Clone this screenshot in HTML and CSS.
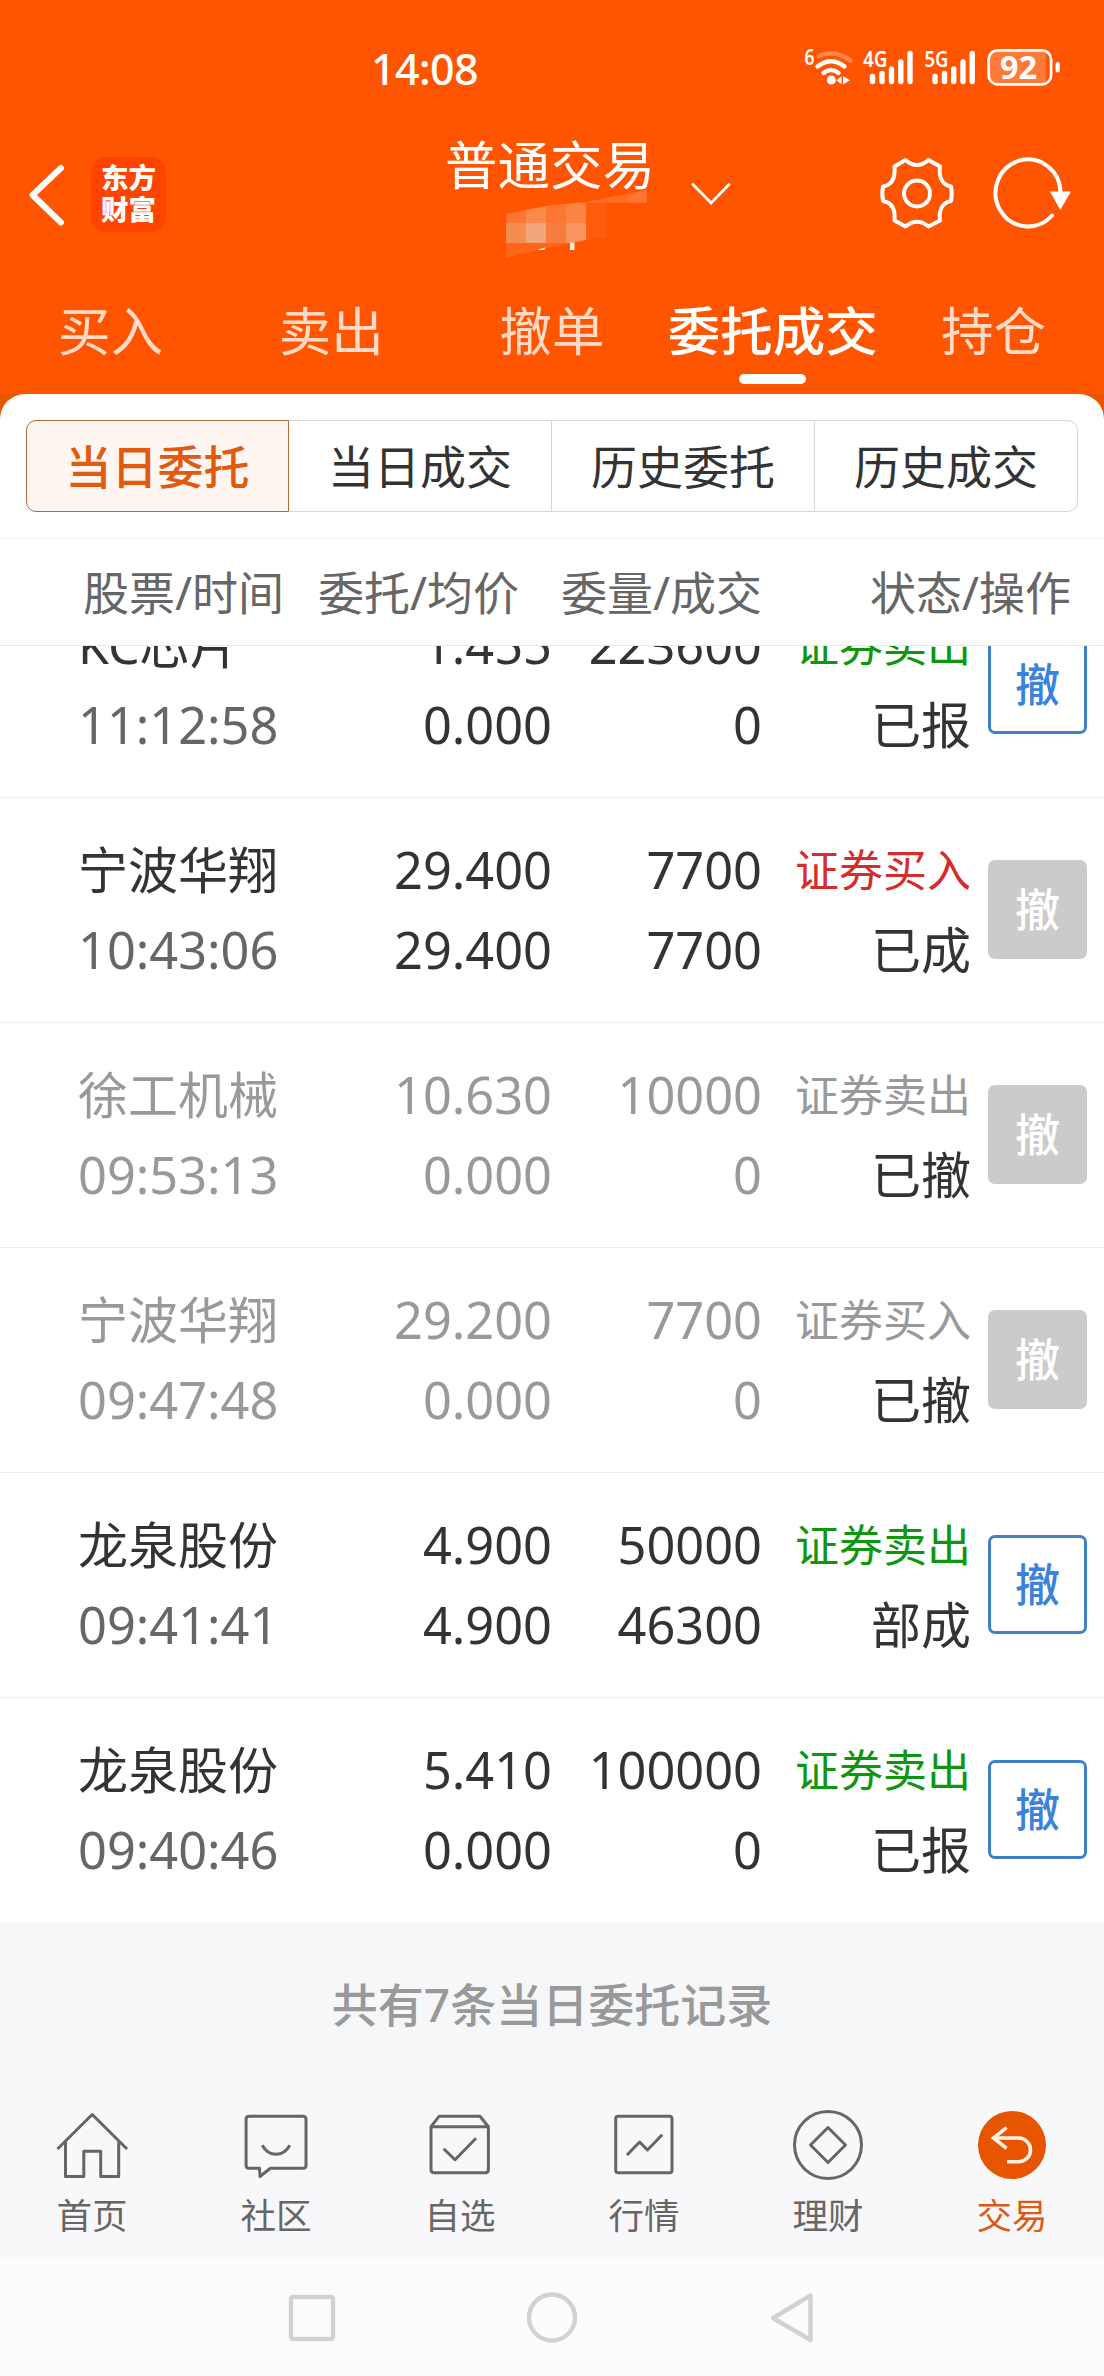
FILE: index.html
```html
<!DOCTYPE html>
<html lang="zh-CN">
<head>
  <meta charset="utf-8">
  <meta name="viewport" content="width=device-width, initial-scale=1.0">
  <title>委托成交</title>
  <link rel="stylesheet" href="styles.css">
</head>
<body>

  <header>
    <!-- Status bar -->
    <div class="status-bar">
      <span class="clock">14:08</span>
      <svg class="status-icons" width="290" height="60" viewBox="0 0 290 60" fill="#fff">
        <text x="14.5" y="25" font-size="22" font-weight="600" textLength="10" lengthAdjust="spacingAndGlyphs">6</text>
        <g fill="none" stroke="#fff" stroke-width="4.4" stroke-linecap="round">
          <path d="M28.5 16Q45 9 60.500 20.500" stroke-opacity="0.3"/>
          <path d="M27.500 26.500Q41 16 54.500 26.500"/>
          <path d="M33.500 33Q41 27 48.500 33"/>
        </g>
        <circle cx="41.300" cy="40" r="4.500"/>
        <path d="M46.500 40.300l5-4v8zM53 36v8.600l7-4.300z"/>
        <text x="73" y="27" font-size="22" font-weight="600" textLength="24.500" lengthAdjust="spacingAndGlyphs">4G</text>
        <g stroke="#fff" stroke-width="5.400" stroke-linecap="round">
          <path d="M82.500 36.500V41.500M92 33.500V41.500M101.500 29V41.500M110.800 22V41.500M120 13.500V41.500"/>
          <path d="M145 36.500V41.500M154.500 33.500V41.500M163.700 29V41.500M173 22V41.500M182.200 13.500V41.500"/>
        </g>
        <text x="134.500" y="27" font-size="22" font-weight="600" textLength="24" lengthAdjust="spacingAndGlyphs">5G</text>
        <path d="M207 11H256V44H207Q199 44 199 36V19Q199 11 207 11Z" fill-opacity="0.22"/>
        <rect x="198.600" y="10.300" width="62.500" height="34" rx="9" fill="none" stroke="#fff" stroke-width="2.700"/>
        <rect x="265.600" y="22" width="4.200" height="10.600" rx="2"/>
        <text x="210" y="39" font-size="32" font-weight="700" textLength="37" lengthAdjust="spacingAndGlyphs">92</text>
      </svg>
    </div>

    <!-- Title bar -->
    <div class="title-bar">
      <svg class="back" width="66" height="80" viewBox="0 0 66 80" fill="none" stroke="#fff" stroke-width="6" stroke-linecap="round" stroke-linejoin="round">
        <path d="M36 13L7.500 40L36 67.500"/>
      </svg>
      <div class="logo">东方<br>财富</div>
      <div class="account">
        <h1>普通交易</h1>
        <svg class="account-mask" width="204" height="74" viewBox="29 6 204 74">
          <clipPath id="mask-shape">
            <path d="M87 34L127 26L167 22L228 10V22.500H187V57L167 60L127 68L87 78Z"/>
          </clipPath>
          <g clip-path="url(#mask-shape)" shape-rendering="crispEdges">
            <path d="M87 6H233V80H87Z" fill="#ff6418"/>
            <path d="M160 6H208V22.500H160Z" fill="#ff6c25"/>
            <path d="M208 6H233V22.500H208Z" fill="#ff7431"/>
            <path d="M87 22H107V43H87Z" fill="#fb7633"/>
            <path d="M107 22H127V43H107Z" fill="#fc8a4b"/>
            <path d="M127 22H147V43H127Z" fill="#fd7633"/>
            <path d="M147 22.500H167V43H147Z" fill="#fb8444"/>
            <path d="M87 43H107V63H87Z" fill="#f78c51"/>
            <path d="M107 43H127V63H107Z" fill="#f0a57c"/>
            <path d="M127 43H147V63H127Z" fill="#f87c3e"/>
            <path d="M147 43H167V63H147Z" fill="#f7945f"/>
            <path d="M167 22.500H187V60H167Z" fill="#ff5d0e"/>
          </g>
          <path d="M151 62.500H155.500V70H151ZM118 69.500L127 67.500L125 70Z" fill="#fff3e0"/>
        </svg>
      </div>
      <svg class="chevron" width="42" height="26" viewBox="0 0 42 26" fill="none" stroke="#fff" stroke-width="2.800" stroke-linecap="round">
        <path d="M3 2.500L21 21L39 2.500"/>
      </svg>
      <div class="actions">
        <svg width="110" height="100" viewBox="0 0 110 100" fill="none" stroke="#fff" stroke-width="4" stroke-linejoin="round">
          <path d="M35.500 15Q47 25 58.500 15L70 21.500C68.500 33 73 40 81 41.500Q82.500 48 81 56C73 57.500 68.500 64 70 75.500L58.500 81.500Q47 72 35.500 81.500L24.500 75.500C25.500 64 21.500 57.500 13 56Q11.500 48 13 41.500C21.500 40 25.500 33 24.500 21.500Z"/>
          <circle cx="47" cy="48.500" r="13"/>
        </svg>
        <svg width="100" height="100" viewBox="110 0 100 100">
          <path d="M182 70.500A32.500 33.500 0 1 1 190.500 48" fill="none" stroke="#fff" stroke-width="4" stroke-linecap="round"/>
          <path d="M180 46.500H201L190.300 65Z" fill="#fff"/>
        </svg>
      </div>
    </div>

    <nav class="tabs">
      <a>买入</a>
      <a>卖出</a>
      <a>撤单</a>
      <a class="active">委托成交</a>
      <a>持仓</a>
    </nav>
  </header>

  <main>
    <div class="sheet">
      <div class="segments">
        <button class="active">当日委托</button>
        <button>当日成交</button>
        <button>历史委托</button>
        <button>历史成交</button>
      </div>
    </div>

    <div class="table-head">
      <span>股票/时间</span>
      <span>委托/均价</span>
      <span>委量/成交</span>
      <span>状态/操作</span>
    </div>

    <!-- Order list, scrolled so the first row is cut off -->
    <div class="orders">
      <div class="order">
        <div class="name">KC芯片<small>11:12:58</small></div>
        <div class="num">1.455<br>0.000</div>
        <div class="num">223600<br>0</div>
        <div class="state"><em class="sell">证券卖出</em>已报</div>
        <button class="cancel">撤</button>
      </div>
      <div class="order">
        <div class="name">宁波华翔<small>10:43:06</small></div>
        <div class="num">29.400<br>29.400</div>
        <div class="num">7700<br>7700</div>
        <div class="state"><em class="buy">证券买入</em>已成</div>
        <button class="cancel" disabled>撤</button>
      </div>
      <div class="order revoked">
        <div class="name">徐工机械<small>09:53:13</small></div>
        <div class="num">10.630<br>0.000</div>
        <div class="num">10000<br>0</div>
        <div class="state"><em>证券卖出</em>已撤</div>
        <button class="cancel" disabled>撤</button>
      </div>
      <div class="order revoked">
        <div class="name">宁波华翔<small>09:47:48</small></div>
        <div class="num">29.200<br>0.000</div>
        <div class="num">7700<br>0</div>
        <div class="state"><em>证券买入</em>已撤</div>
        <button class="cancel" disabled>撤</button>
      </div>
      <div class="order">
        <div class="name">龙泉股份<small>09:41:41</small></div>
        <div class="num">4.900<br>4.900</div>
        <div class="num">50000<br>46300</div>
        <div class="state"><em class="sell">证券卖出</em>部成</div>
        <button class="cancel">撤</button>
      </div>
      <div class="order">
        <div class="name">龙泉股份<small>09:40:46</small></div>
        <div class="num">5.410<br>0.000</div>
        <div class="num">100000<br>0</div>
        <div class="state"><em class="sell">证券卖出</em>已报</div>
        <button class="cancel">撤</button>
      </div>
    </div>

    <p class="total">共有7条当日委托记录</p>
  </main>

  <footer>
    <nav class="bottom-tabs">
      <a>
        <svg viewBox="0 0 184 90">
          <path d="M57.500 49L92.200 14.500L127 49M65.500 42V76.500H83.800V51.300H100.700V76.500H118.700V42"/>
        </svg>
        首页
      </a>
      <a>
        <svg viewBox="0 0 184 90">
          <path d="M65 16.300H119Q122 16.300 122 19.300V65.300Q122 68.300 119 68.300H86.400L76 76.500L75.500 68.300H65Q62.100 68.300 62.100 65.300V19.300Q62.100 16.300 65 16.300Z"/>
          <path d="M78.300 45.300Q83 54.300 92 54.300T105.800 45.300"/>
        </svg>
        社区
      </a>
      <a>
        <svg viewBox="0 0 184 90">
          <path d="M63 26.700L71 16.300H112L120.400 26.700V69.500Q120.400 72.700 117.400 72.700H66Q63 72.700 63 69.500ZM63 26.700H120.400M75.700 48.700L87 59.700L108 38.300"/>
        </svg>
        自选
      </a>
      <a>
        <svg viewBox="0 0 184 90">
          <rect x="63.700" y="16.300" width="56.300" height="56.400" rx="2.500"/>
          <path d="M75 55L87.700 42L95.400 50L110.200 34.700"/>
        </svg>
        行情
      </a>
      <a>
        <svg viewBox="0 0 184 90">
          <circle cx="92" cy="45" r="33.500"/>
          <path d="M92 27.500L109.500 45L92 62.500L74.500 45Z"/>
        </svg>
        理财
      </a>
      <a class="active">
        <svg viewBox="0 0 184 90">
          <circle class="disc" cx="92" cy="45" r="34"/>
          <path class="arrow" d="M86.600 27.700L73.500 38L86.600 48.300M73.500 38H98.500A12 11.900 0 0 1 98.500 61.800H87"/>
        </svg>
        交易
      </a>
    </nav>

    <!-- System navigation keys -->
    <div class="system-keys">
      <svg viewBox="0 0 60 60"><rect x="9" y="9" width="42" height="42" rx="2"/></svg>
      <svg viewBox="0 0 60 60"><circle cx="30" cy="29.500" r="23"/></svg>
      <svg viewBox="0 0 60 60"><path d="M48.500 7.500V52L11 30Z"/></svg>
    </div>
  </footer>

</body>
</html>
```

FILE: styles.css
```css
* {
  box-sizing: border-box;
}

body {
  width: 1104px;
  margin: 0;
  font-family: "Noto Sans", "Noto Sans CJK SC", sans-serif;
  color: #333;
  background-color: #fff;
}

button {
  font-family: inherit;
  padding: 0;
}

/* Header */
header {
  height: 394px;
  color: #fff;
  background-color: #ff5500;
}

.status-bar {
  display: flex;
  justify-content: space-between;
  height: 120px;
  padding: 40px 24px 0 371px;
}

.clock {
  font-size: 43px;
  font-weight: 500;
  line-height: 57px;
  letter-spacing: -0.6px;
}

.title-bar {
  display: flex;
  align-items: center;
  height: 149px;
  padding: 0 24px 0 25px;
}

.logo {
  width: 75px;
  height: 75px;
  padding-top: 5px;
  border-radius: 15px;
  background-color: #ff4400;
  font-size: 27.5px;
  font-weight: 900;
  line-height: 32px;
  text-align: center;
}

.account {
  align-self: flex-start;
  width: 204px;
  height: 149px;
  margin-left: 282px;
  padding-top: 15px;
}

.account h1 {
  margin: 0 0 0 -3px;
  font-size: 52.5px;
  font-weight: 400;
  line-height: 60px;
  white-space: nowrap;
}

.account-mask {
  display: block;
  margin-top: -9px;
}

.chevron {
  margin-left: 38px;
}

.actions {
  display: flex;
  margin-left: auto;
}

.tabs {
  display: grid;
  grid-template-columns: repeat(5, 1fr);
  height: 125px;
}

.tabs a {
  display: flex;
  flex-direction: column;
  align-items: center;
  padding-top: 27px;
  color: #ffdac6;
  font-size: 52.5px;
  line-height: 70px;
  white-space: nowrap;
}

.tabs .active {
  color: #fff;
  font-weight: 500;
}

.tabs .active::after {
  content: "";
  width: 67px;
  height: 10px;
  margin-top: 8px;
  border-radius: 5px;
  background-color: #fff;
}

/* Sheet with the segmented control */
main {
  background-color: #e85500;
}

.sheet {
  height: 145px;
  padding: 26px 26px 0;
  border-bottom: 1px solid #f5f5f5;
  border-radius: 25px 25px 0 0;
  background-color: #fff;
}

.segments {
  display: grid;
  grid-template-columns: repeat(4, 1fr);
  height: 92px;
}

.segments button {
  border: 1px solid #d5d7d8;
  border-left-width: 0;
  background-color: #fff;
  color: #333;
  font-size: 46px;
  line-height: 90px;
}

.segments button:first-child {
  border-radius: 10px 0 0 10px;
}

.segments button:last-child {
  border-radius: 0 10px 10px 0;
}

.segments .active {
  border: 1px solid #b06a3c;
  background-color: #fff6f2;
  color: #e05a10;
  font-weight: 500;
}

/* Orders table */
.table-head {
  display: grid;
  grid-template-columns: 235px 243px 309px 200px;
  height: 107px;
  padding-left: 83px;
  border-bottom: 1px solid #e9e9e9;
  background-color: #fff;
  color: #666;
  font-size: 46px;
  line-height: 106px;
  white-space: nowrap;
}

.orders {
  display: flex;
  flex-direction: column;
  justify-content: flex-end;
  height: 1276px;
  overflow: hidden;
  background-color: #fff;
}

.order {
  display: grid;
  flex: none;
  grid-template-columns: 222px 252px 210px 209px 99px;
  height: 225px;
  padding: 32px 0 0 78px;
  border-bottom: 1px solid #ececec;
  font-size: 50px;
  line-height: 80px;
  white-space: nowrap;
}

.order:last-child {
  height: 224px;
  border-bottom: none;
}

.name small {
  display: block;
  color: #666;
  font-size: 50.5px;
}

.num {
  font-size: 50.5px;
  text-align: right;
}

.state {
  text-align: right;
}

.state em {
  display: block;
  font-size: 44px;
  font-style: normal;
}

.sell {
  color: #0f960f;
}

.buy {
  color: #d62c2c;
}

.revoked .name,
.revoked .name small,
.revoked .num,
.revoked em {
  color: #999;
}

.cancel {
  width: 99px;
  height: 99px;
  margin: 30px 0 0 17px;
  border: 3px solid #3f80c8;
  border-radius: 7px;
  background-color: #fff;
  color: #3b82da;
  font-size: 45px;
  font-weight: 500;
  line-height: 90px;
}

.cancel:disabled {
  border-color: #cbcbcb;
  background-color: #cbcbcb;
  color: #fff;
}

.total {
  height: 156px;
  margin: 0;
  padding-top: 42px;
  background-color: #f6f7f9;
  color: #999;
  font-size: 46px;
  font-weight: 500;
  line-height: 80px;
  text-align: center;
}

/* Bottom navigation */
.bottom-tabs {
  display: grid;
  grid-template-columns: repeat(6, 1fr);
  height: 181px;
  padding-top: 22px;
  background-color: #f8f8fa;
}

.bottom-tabs a {
  color: #666;
  font-size: 35.5px;
  line-height: 50px;
  text-align: center;
}

.bottom-tabs svg {
  display: block;
  width: 184px;
  height: 90px;
  fill: none;
  stroke: #666;
  stroke-width: 3;
  stroke-linejoin: round;
}

.bottom-tabs .active {
  color: #dc5a14;
}

.bottom-tabs .disc {
  fill: #e85500;
  stroke: none;
}

.bottom-tabs .arrow {
  stroke: #fff0e4;
  stroke-width: 3.6;
  stroke-linejoin: miter;
}

.system-keys {
  display: flex;
  justify-content: center;
  gap: 180px;
  height: 117px;
  padding-top: 29px;
  background-color: #fcfcfc;
}

.system-keys svg {
  width: 60px;
  height: 60px;
  fill: none;
  stroke: #d2d2d2;
  stroke-width: 4.4;
  stroke-linejoin: round;
}
```
